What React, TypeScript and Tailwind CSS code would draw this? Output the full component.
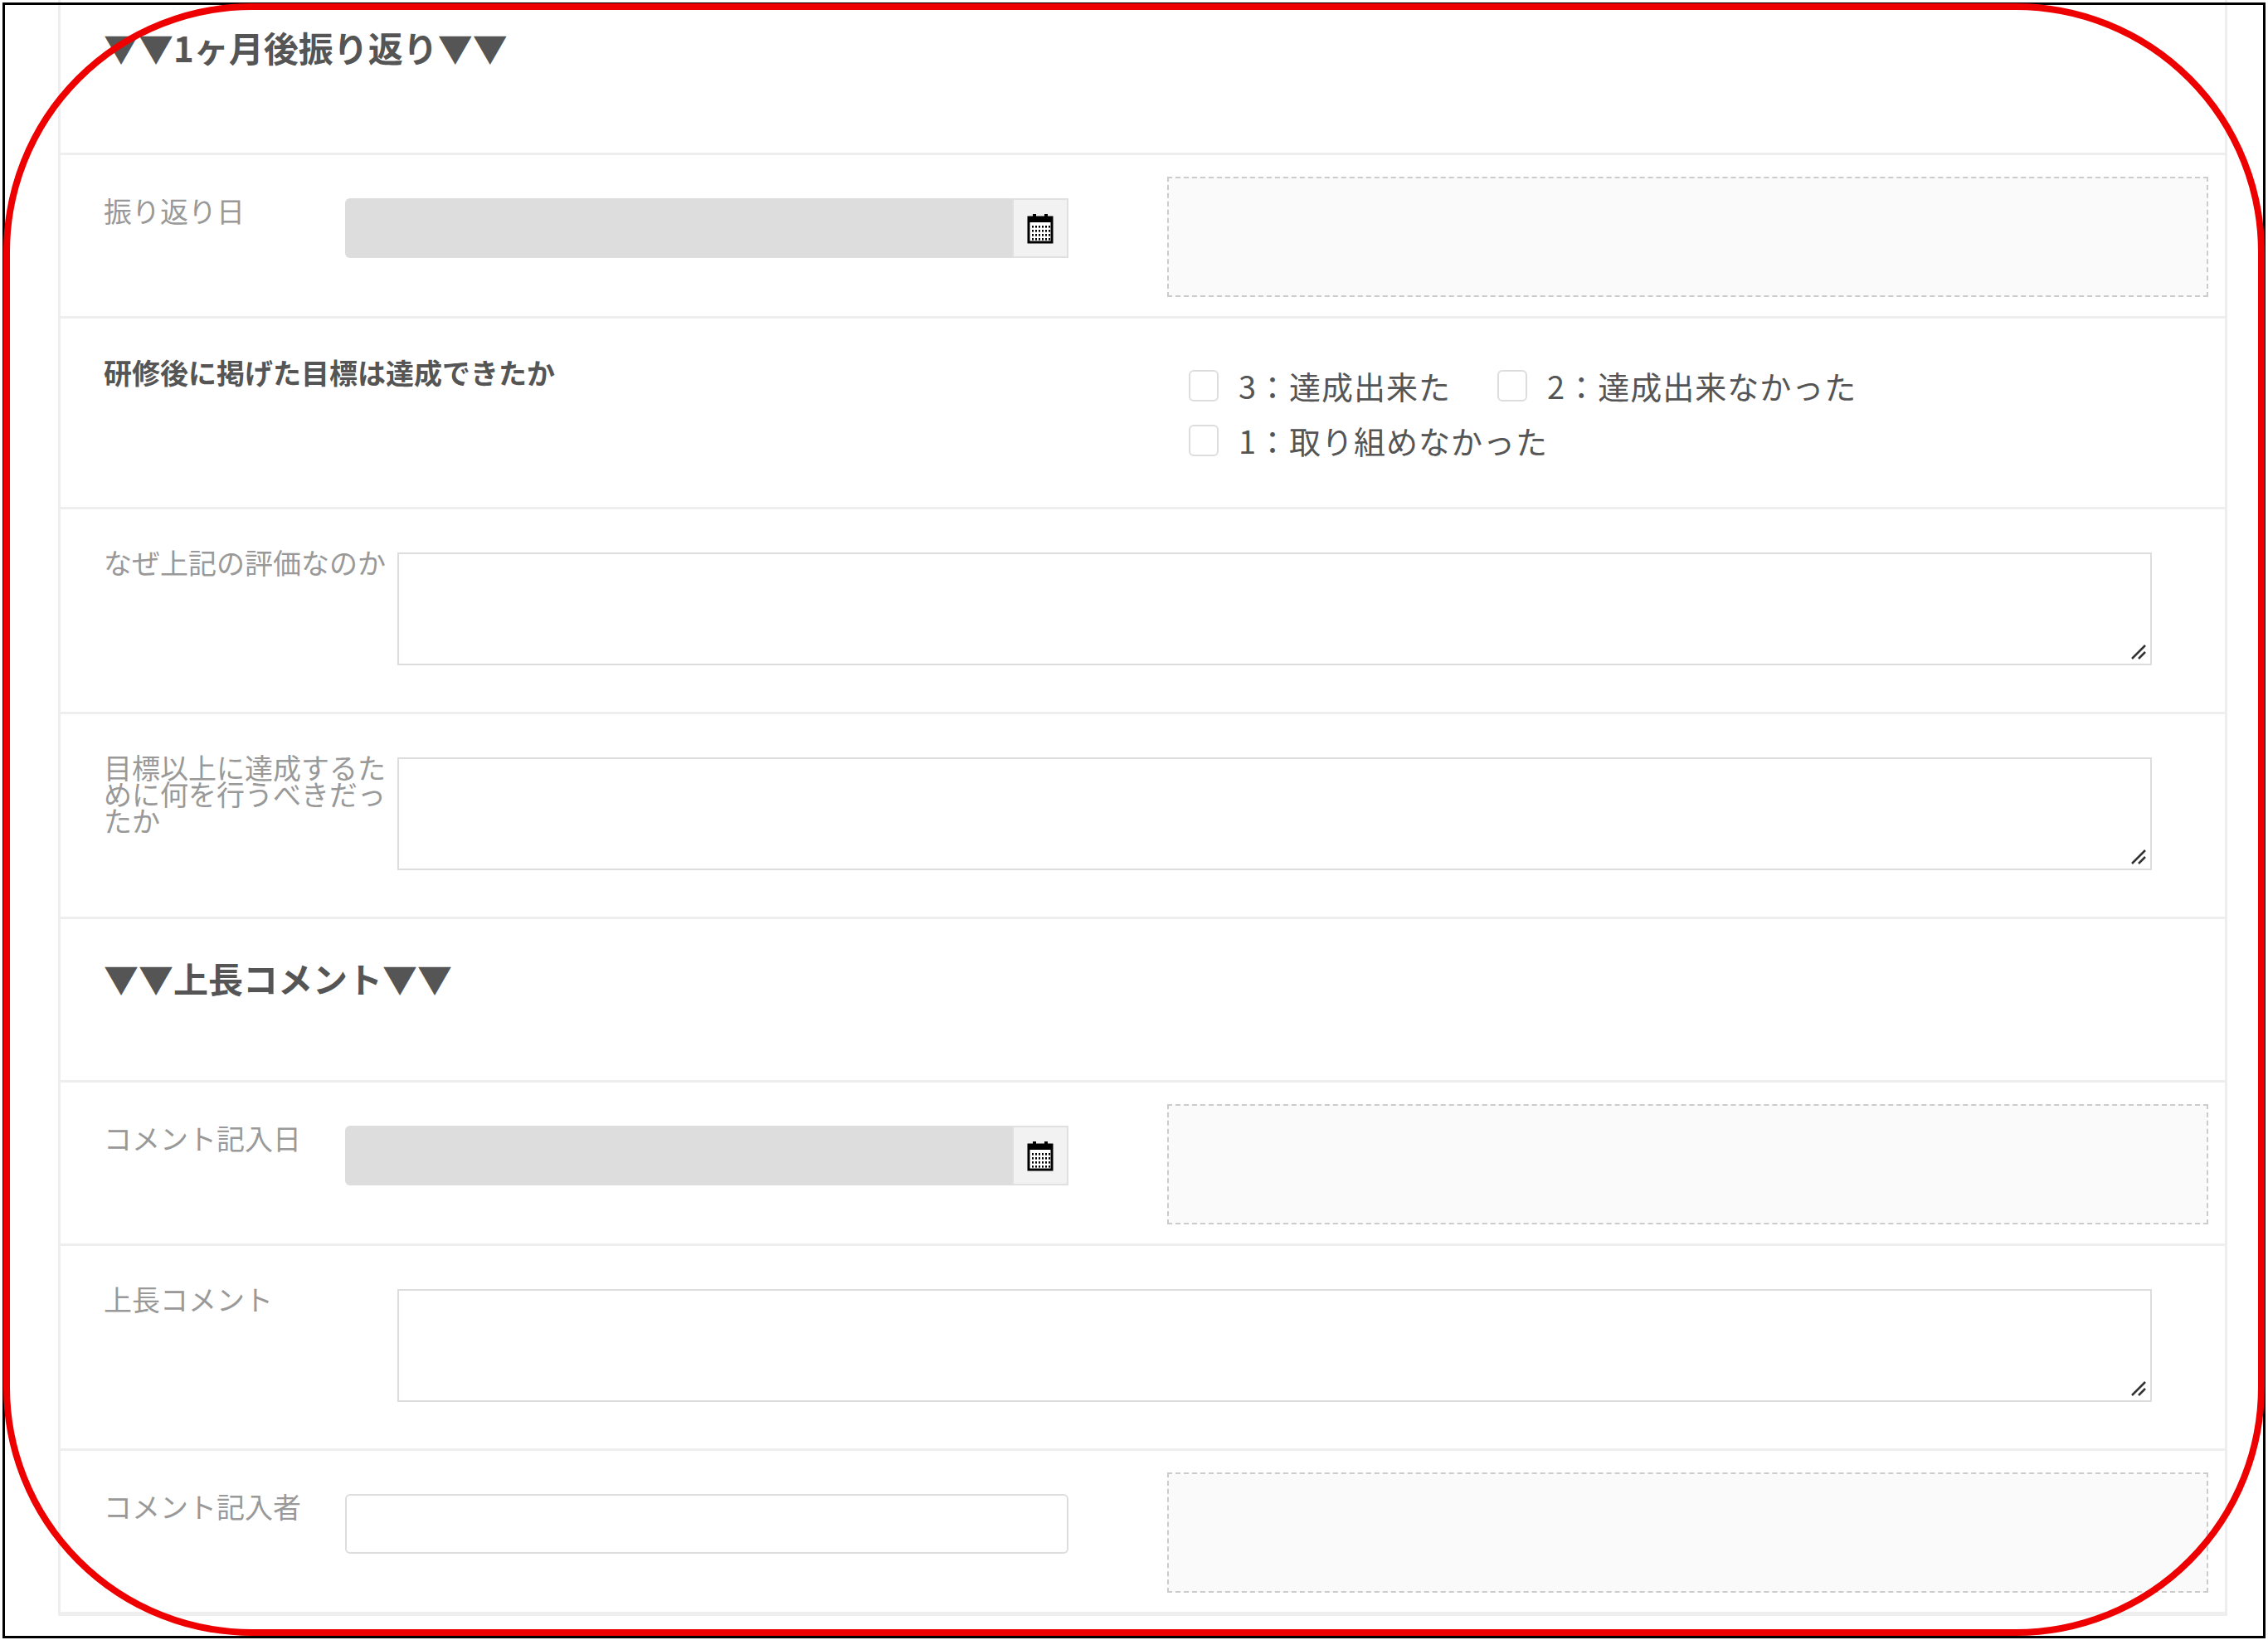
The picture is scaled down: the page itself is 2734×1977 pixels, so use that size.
import React from "react";

const font = { fontFamily: '"Noto Sans CJK JP", "Noto Sans", sans-serif' };

function Cal() {
  return (
    <svg width="34" height="38" viewBox="0 0 17 19">
      <rect x="1.5" y="3" width="14" height="15" fill="#fff" stroke="#000" strokeWidth="1.5" />
      <rect x="1.5" y="3" width="14" height="3" fill="#000" />
      <rect x="4" y="1" width="2" height="4" fill="#000" />
      <rect x="11" y="1" width="2" height="4" fill="#000" />
      {[8, 10.5, 13, 15.5].map((y) =>
        [3.5, 5.5, 7.5, 9.5, 11.5, 13.5].map((x) => (
          <rect key={x + "-" + y} x={x} y={y} width="1" height="1.3" fill="#000" />
        ))
      )}
    </svg>
  );
}

function Heading({ text }: { text: string }) {
  return (
    <div className="h-[197px] border-b-[3px] border-[#eeeeee] pl-[52px] pt-[50px]">
      <div className="text-[42px] font-bold text-[#555555] leading-none">{text}</div>
    </div>
  );
}

function DateRow({ label, disabled }: { label: string; disabled: boolean }) {
  return (
    <div className="h-[197px] border-b-[3px] border-[#eeeeee] flex">
      <div className="w-[343px] pl-[52px] pt-[50px] text-[34px] text-[#999999] leading-none shrink-0">{label}</div>
      <div className="pt-[52px] flex h-fit">
        {disabled ? (
          <>
            <div className="w-[804px] h-[72px] bg-[#dddddd] rounded-l-[6px]" />
            <div className="w-[68px] h-[72px] bg-[#f2f2f2] border-2 border-[#e0e0e0] flex items-center justify-center">
              <Cal />
            </div>
          </>
        ) : (
          <div className="w-[872px] h-[72px] bg-white border-2 border-[#dddddd] rounded-[6px]" />
        )}
      </div>
      <div className="ml-[119px] mt-[26px] w-[1255px] h-[145px] border-2 border-dashed border-[#cccccc] bg-[#fafafa]" />
    </div>
  );
}

function AreaRow({ label }: { label: React.ReactNode }) {
  return (
    <div className="h-[247px] border-b-[3px] border-[#eeeeee] flex">
      <div className="w-[406px] pl-[52px] pt-[48px] text-[34px] text-[#999999] leading-[32px] shrink-0 whitespace-nowrap">{label}</div>
      <div className="mt-[52px] w-[2115px] h-[136px] border-2 border-[#dddddd] relative">
        <svg className="absolute right-[4px] bottom-[4px]" width="22" height="22" viewBox="0 0 22 22">
          <line x1="4" y1="20" x2="20" y2="4" stroke="#333" strokeWidth="2.5" />
          <line x1="12" y1="20" x2="20" y2="12" stroke="#333" strokeWidth="2.5" />
        </svg>
      </div>
    </div>
  );
}

function Check({ label }: { label: string }) {
  return (
    <div className="flex items-center gap-[24px]">
      <div className="w-[36px] h-[38px] border-2 border-[#dddddd] rounded-[6px] bg-white" />
      <span className="text-[38px] text-[#555555] leading-none tracking-[1px]">{label}</span>
    </div>
  );
}

export default function App() {
  return (
    <div style={font} className="w-[2734px] h-[1977px] bg-white relative overflow-hidden">
      <div className="absolute left-[3px] top-[3px] w-[2728px] h-[1972px] border-[3px] border-black pointer-events-none" />
      <div className="ml-[70px] w-[2615px] h-[1948px] border-x-[3px] border-b-[3px] border-[#eeeeee]">
        <div className="h-[187px] border-b-[3px] border-[#eeeeee] pl-[52px] pt-[36px]">
          <div className="text-[42px] font-bold text-[#555555] leading-none">▼▼1ヶ月後振り返り▼▼</div>
        </div>
        <DateRow label="振り返り日" disabled />
        <div className="h-[230px] border-b-[3px] border-[#eeeeee] flex">
          <div className="w-[1360px] pl-[52px] pt-[48px] text-[34px] font-bold text-[#555555] leading-none shrink-0">
            研修後に掲げた目標は達成できたか
          </div>
          <div className="pt-[62px] flex flex-col gap-[28px]">
            <div className="flex gap-[56px]">
              <Check label="3：達成出来た" />
              <Check label="2：達成出来なかった" />
            </div>
            <Check label="1：取り組めなかった" />
          </div>
        </div>
        <AreaRow label="なぜ上記の評価なのか" />
        <AreaRow label={<>目標以上に達成するた<br />めに何を行うべきだっ<br />たか</>} />
        <Heading text="▼▼上長コメント▼▼" />
        <DateRow label="コメント記入日" disabled />
        <AreaRow label="上長コメント" />
        <DateRow label="コメント記入者" disabled={false} />
      </div>
      <div className="absolute left-[4px] top-[4px] w-[2726px] h-[1968px] border-[8px] border-[#ee0000] rounded-[300px] pointer-events-none" />
    </div>
  );
}
